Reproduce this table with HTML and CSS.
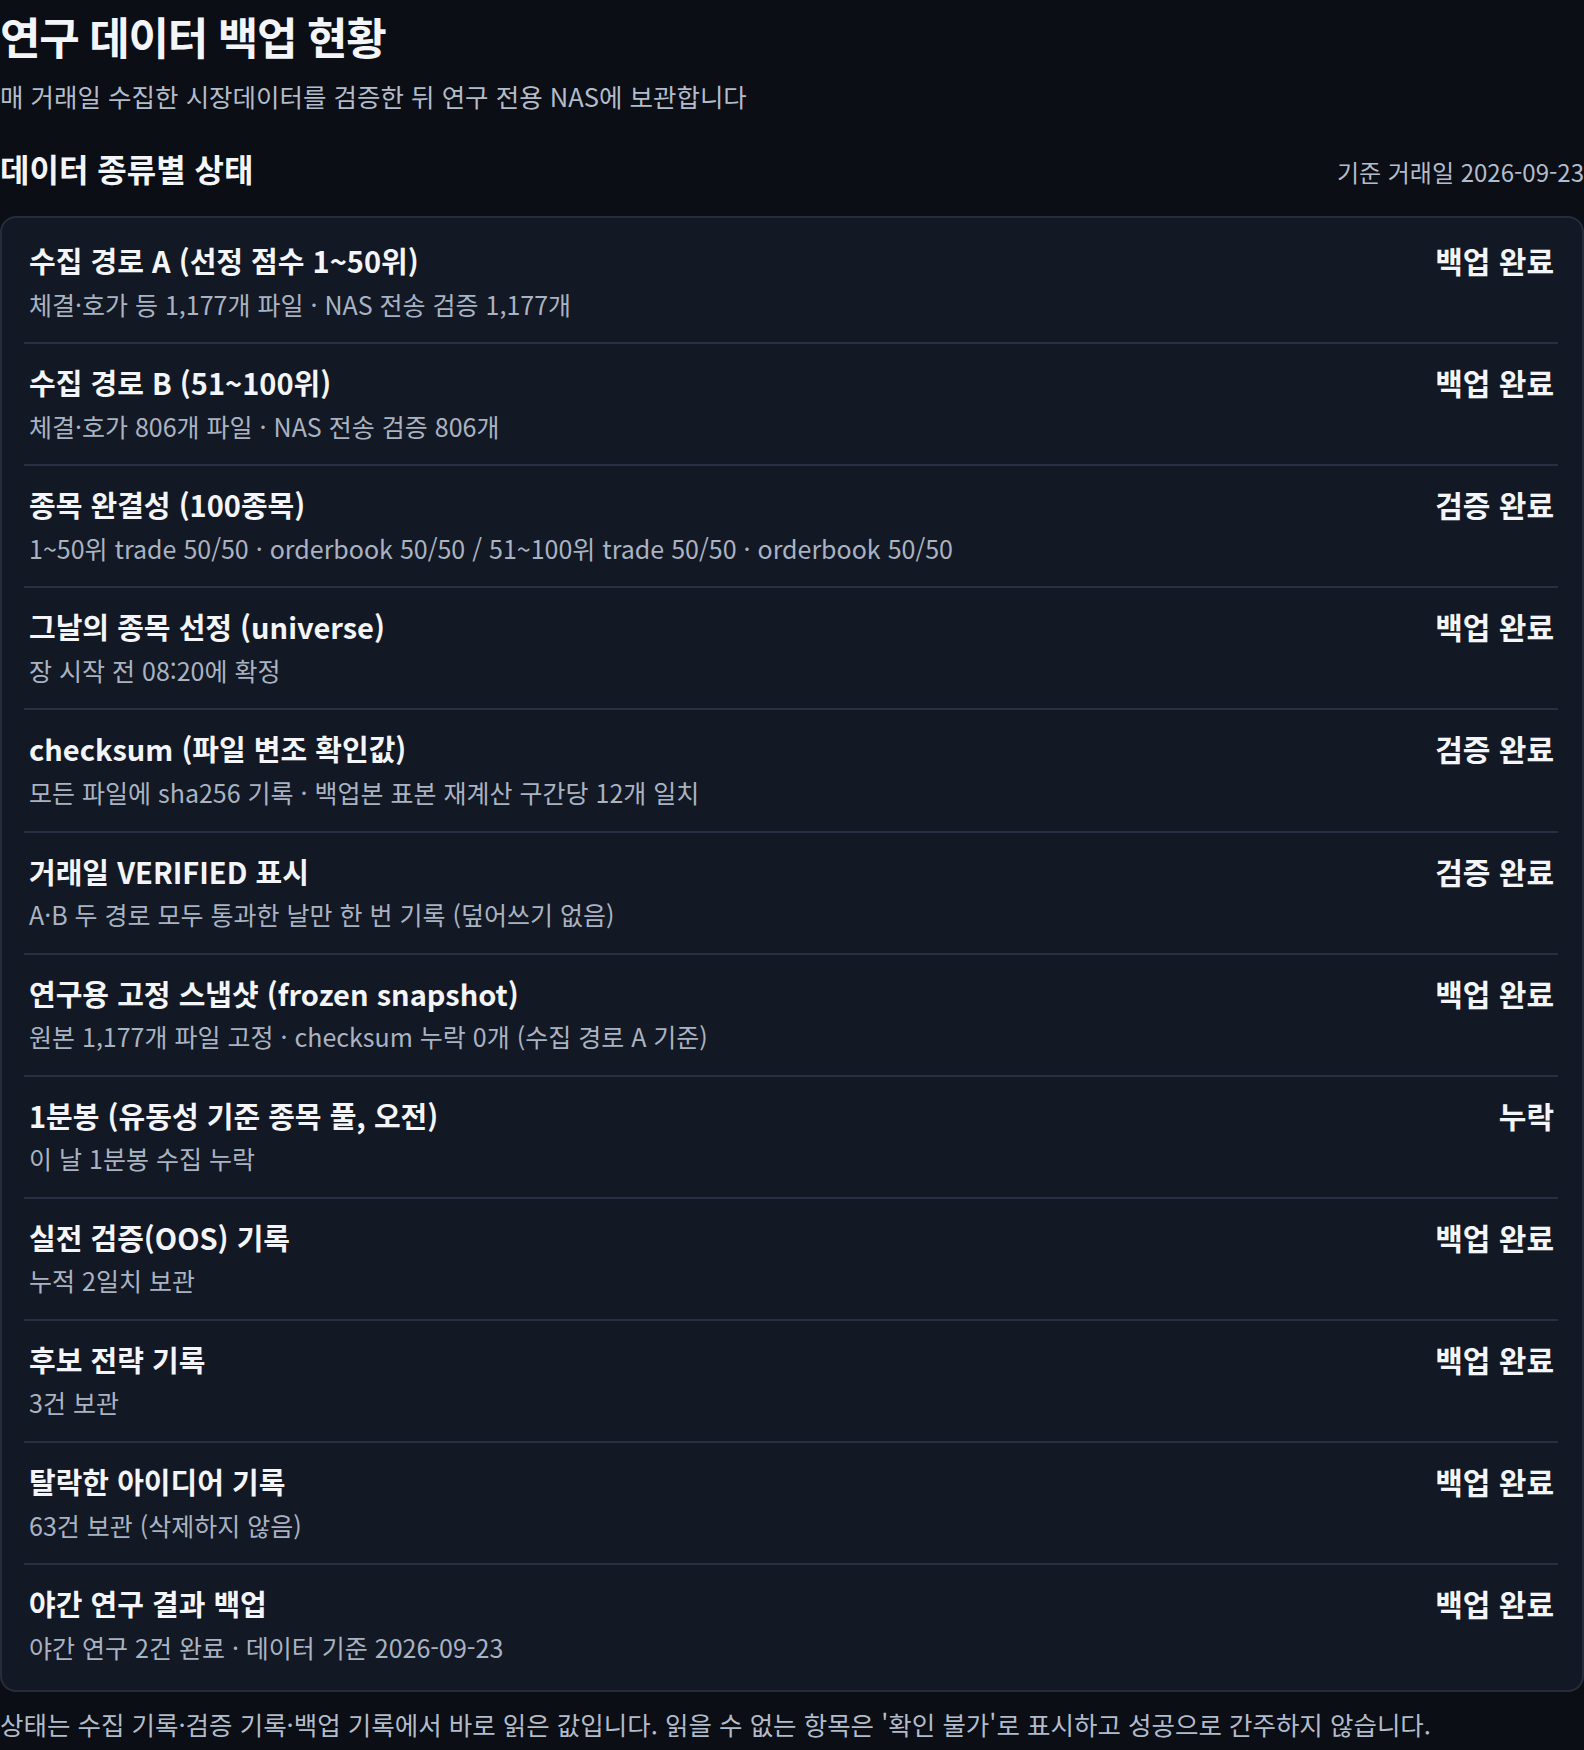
FILE: index.html
```html
<!DOCTYPE html>
<html lang="ko">
<head>
<meta charset="utf-8">
<title>연구 데이터 백업 현황</title>
<link rel="stylesheet" href="styles.css">
</head>
<body>
<main class="page">
  <header class="page-head">
    <h1 class="page-title">연구 데이터 백업 현황</h1>
    <p class="page-desc">매 거래일 수집한 시장데이터를 검증한 뒤 연구 전용 NAS에 보관합니다</p>
  </header>

  <section class="status">
    <div class="status-head">
      <h2 class="status-title">데이터 종류별 상태</h2>
      <span class="status-date">기준 거래일 2026-09-23</span>
    </div>

    <ul class="card">
      <li class="row">
        <div class="row-main">
          <div class="row-title">수집 경로 A (선정 점수 1~50위)</div>
          <div class="row-sub">체결·호가 등 1,177개 파일 · NAS 전송 검증 1,177개</div>
        </div>
        <div class="row-state">백업 완료</div>
      </li>
      <li class="row">
        <div class="row-main">
          <div class="row-title">수집 경로 B (51~100위)</div>
          <div class="row-sub">체결·호가 806개 파일 · NAS 전송 검증 806개</div>
        </div>
        <div class="row-state">백업 완료</div>
      </li>
      <li class="row">
        <div class="row-main">
          <div class="row-title">종목 완결성 (100종목)</div>
          <div class="row-sub">1~50위 trade 50/50 · orderbook 50/50 / 51~100위 trade 50/50 · orderbook 50/50</div>
        </div>
        <div class="row-state">검증 완료</div>
      </li>
      <li class="row">
        <div class="row-main">
          <div class="row-title">그날의 종목 선정 (universe)</div>
          <div class="row-sub">장 시작 전 08:20에 확정</div>
        </div>
        <div class="row-state">백업 완료</div>
      </li>
      <li class="row">
        <div class="row-main">
          <div class="row-title">checksum (파일 변조 확인값)</div>
          <div class="row-sub">모든 파일에 sha256 기록 · 백업본 표본 재계산 구간당 12개 일치</div>
        </div>
        <div class="row-state">검증 완료</div>
      </li>
      <li class="row">
        <div class="row-main">
          <div class="row-title">거래일 VERIFIED 표시</div>
          <div class="row-sub">A·B 두 경로 모두 통과한 날만 한 번 기록 (덮어쓰기 없음)</div>
        </div>
        <div class="row-state">검증 완료</div>
      </li>
      <li class="row">
        <div class="row-main">
          <div class="row-title">연구용 고정 스냅샷 (frozen snapshot)</div>
          <div class="row-sub">원본 1,177개 파일 고정 · checksum 누락 0개 (수집 경로 A 기준)</div>
        </div>
        <div class="row-state">백업 완료</div>
      </li>
      <li class="row">
        <div class="row-main">
          <div class="row-title">1분봉 (유동성 기준 종목 풀, 오전)</div>
          <div class="row-sub">이 날 1분봉 수집 누락</div>
        </div>
        <div class="row-state">누락</div>
      </li>
      <li class="row">
        <div class="row-main">
          <div class="row-title">실전 검증(OOS) 기록</div>
          <div class="row-sub">누적 2일치 보관</div>
        </div>
        <div class="row-state">백업 완료</div>
      </li>
      <li class="row">
        <div class="row-main">
          <div class="row-title">후보 전략 기록</div>
          <div class="row-sub">3건 보관</div>
        </div>
        <div class="row-state">백업 완료</div>
      </li>
      <li class="row">
        <div class="row-main">
          <div class="row-title">탈락한 아이디어 기록</div>
          <div class="row-sub">63건 보관 (삭제하지 않음)</div>
        </div>
        <div class="row-state">백업 완료</div>
      </li>
      <li class="row">
        <div class="row-main">
          <div class="row-title">야간 연구 결과 백업</div>
          <div class="row-sub">야간 연구 2건 완료 · 데이터 기준 2026-09-23</div>
        </div>
        <div class="row-state">백업 완료</div>
      </li>
    </ul>
  </section>

  <p class="note">상태는 수집 기록·검증 기록·백업 기록에서 바로 읽은 값입니다. 읽을 수 없는 항목은 '확인 불가'로 표시하고 성공으로 간주하지 않습니다.</p>
</main>
</body>
</html>
```

FILE: styles.css
```css
html, body {
  margin: 0;
  padding: 0;
  background: #0b0e14;
}

body {
  font-family: "Noto Sans CJK KR", "Noto Sans", sans-serif;
  color: #eef1f6;
}

.page {
  display: flex;
  flex-direction: column;
  padding: 10px 0 0;
}

.page-head {
  display: flex;
  flex-direction: column;
  gap: 15px;
}

.page-title {
  margin: 0;
  font-size: 44px;
  font-weight: 700;
  line-height: 1.2;
  letter-spacing: -0.03em;
  color: #f3f5f9;
}

.page-desc {
  margin: 0;
  font-size: 25.5px;
  line-height: 1.4;
  color: #b3bccb;
}

.status {
  margin-top: 35px;
}

.status-head {
  display: flex;
  justify-content: space-between;
  align-items: baseline;
  margin-bottom: 26px;
}

.status-title {
  margin: 0;
  font-size: 32px;
  font-weight: 700;
  line-height: 1.3;
  color: #f3f5f9;
}

.status-date {
  font-size: 24px;
  color: #b3bccb;
}

.card {
  list-style: none;
  margin: 0;
  padding: 4px 24px 5px 22px;
  background: #131924;
  border: 2px solid #252d3d;
  border-radius: 16px;
}

.row {
  display: flex;
  justify-content: space-between;
  align-items: flex-start;
  padding: 20px 4px 20.6px 5px;
  border-bottom: 2px solid #273043;
}

.row:last-child {
  border-bottom: none;
}

.row-main {
  display: flex;
  flex-direction: column;
  gap: 7.5px;
}

.row-title {
  font-size: 29px;
  font-weight: 700;
  line-height: 37px;
  color: #f3f5f9;
}

.row-sub {
  font-size: 25px;
  line-height: 35px;
  color: #aab3c2;
}

.row-state {
  font-size: 30px;
  font-weight: 700;
  line-height: 37px;
  color: #f3f5f9;
}

.note {
  margin: 14px 0 0;
  font-size: 25.5px;
  line-height: 1.4;
  color: #b3bccb;
}
```
